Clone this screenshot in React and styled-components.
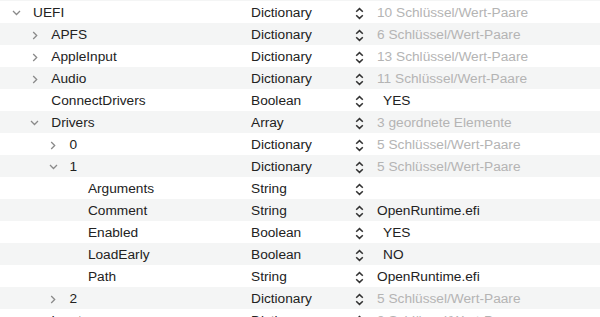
import styled, { createGlobalStyle } from 'styled-components';

const rows = [
  { key: 'UEFI', depth: 0, open: true, type: 'Dictionary', value: '10 Schlüssel/Wert-Paare', dim: true },
  { key: 'APFS', depth: 1, open: false, type: 'Dictionary', value: '6 Schlüssel/Wert-Paare', dim: true },
  { key: 'AppleInput', depth: 1, open: false, type: 'Dictionary', value: '13 Schlüssel/Wert-Paare', dim: true },
  { key: 'Audio', depth: 1, open: false, type: 'Dictionary', value: '11 Schlüssel/Wert-Paare', dim: true },
  { key: 'ConnectDrivers', depth: 1, type: 'Boolean', value: 'YES', bool: true },
  { key: 'Drivers', depth: 1, open: true, type: 'Array', value: '3 geordnete Elemente', dim: true },
  { key: '0', depth: 2, open: false, type: 'Dictionary', value: '5 Schlüssel/Wert-Paare', dim: true },
  { key: '1', depth: 2, open: true, type: 'Dictionary', value: '5 Schlüssel/Wert-Paare', dim: true },
  { key: 'Arguments', depth: 3, type: 'String', value: '' },
  { key: 'Comment', depth: 3, type: 'String', value: 'OpenRuntime.efi' },
  { key: 'Enabled', depth: 3, type: 'Boolean', value: 'YES', bool: true },
  { key: 'LoadEarly', depth: 3, type: 'Boolean', value: 'NO', bool: true },
  { key: 'Path', depth: 3, type: 'String', value: 'OpenRuntime.efi' },
  { key: '2', depth: 2, open: false, type: 'Dictionary', value: '5 Schlüssel/Wert-Paare', dim: true },
  { key: 'Input', depth: 1, open: false, type: 'Dictionary', value: '8 Schlüssel/Wert-Paare', dim: true },
];

const GlobalStyle = createGlobalStyle`
  html, body {
    margin: 0;
    padding: 0;
    background: #fff;
    overflow: hidden;
  }
  body {
    font-family: "Liberation Sans", Arial, sans-serif;
    font-size: 13.7px;
    color: #222;
  }
`;

const Outline = styled.div`
  width: 600px;
  border-top: 1px solid #f4f5f5;
`;

const Row = styled.div`
  display: flex;
  align-items: center;
  height: 22px;
  padding-top: 2px;
  box-sizing: border-box;
  line-height: 20px;
  background: ${(p) => (p.$odd ? '#f4f5f5' : '#fff')};
  white-space: nowrap;
`;

const KeyCell = styled.div`
  width: 251px;
  flex: none;
  display: flex;
  align-items: center;
  padding-left: ${(p) => 8 + p.$depth * 18.3}px;
  box-sizing: border-box;
`;

const Disclosure = styled.span`
  width: 17px;
  height: 20px;
  flex: none;
  display: flex;
  align-items: center;
  justify-content: center;
  margin-right: 8px;
`;

const TypeCell = styled.div`
  width: 104px;
  flex: none;
`;

const Stepper = styled.span`
  width: 9px;
  height: 20px;
  flex: none;
  display: flex;
  align-items: center;
`;

const ValueCell = styled.div`
  padding-left: ${(p) => (p.$bool ? 19 : 13)}px;
  color: ${(p) => (p.$dim ? '#b4b4b4' : '#222')};
`;

const Chevron = ({ open }) =>
  open ? (
    <svg width="9" height="6" viewBox="0 0 9 6">
      <path d="M1 1 L4.5 4.5 L8 1" fill="none" stroke="#8a8a8a" strokeWidth="1.3" />
    </svg>
  ) : (
    <svg width="6" height="9" viewBox="0 0 6 9">
      <path d="M1.2 1 L4.7 4.5 L1.2 8" fill="none" stroke="#8a8a8a" strokeWidth="1.3" />
    </svg>
  );

const UpDown = () => (
  <svg width="9" height="13" viewBox="0 0 9 13">
    <path d="M1.2 4.8 L4.5 1.6 L7.8 4.8" fill="none" stroke="#333" strokeWidth="1.5" />
    <path d="M1.2 8.2 L4.5 11.4 L7.8 8.2" fill="none" stroke="#333" strokeWidth="1.5" />
  </svg>
);

const App = () => (
  <>
    <GlobalStyle />
    <Outline>
      {rows.map((r, i) => (
        <Row key={i} $odd={i % 2 === 1}>
          <KeyCell $depth={r.depth}>
            <Disclosure>{r.open !== undefined && <Chevron open={r.open} />}</Disclosure>
            {r.key}
          </KeyCell>
          <TypeCell>{r.type}</TypeCell>
          <Stepper>
            <UpDown />
          </Stepper>
          <ValueCell $dim={r.dim} $bool={r.bool}>
            {r.value}
          </ValueCell>
        </Row>
      ))}
    </Outline>
  </>
);

export default App;
